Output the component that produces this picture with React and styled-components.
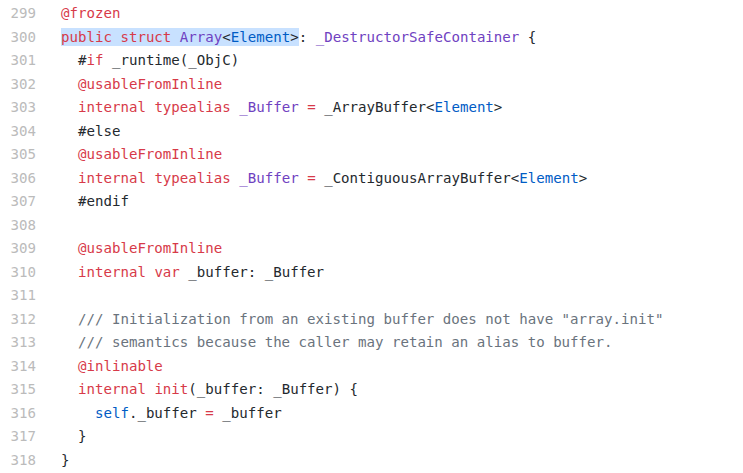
import React from "react";
import styled, { createGlobalStyle } from "styled-components";

const GlobalStyle = createGlobalStyle`
  html, body {
    margin: 0;
    padding: 0;
    background: #fff;
  }
`;

const Blob = styled.div`
  display: flex;
  flex-direction: column;
  padding-top: 2px;
  font-family: "DejaVu Sans Mono", "Liberation Mono", monospace;
  font-size: 14.1px;
  line-height: 23.5px;
  color: #24292e;
  width: 743px;
`;

const Row = styled.div`
  display: flex;
  gap: 25px;
  height: 23.5px;
`;

const LineNum = styled.div`
  width: 36px;
  flex: none;
  text-align: right;
  color: #bbbbbb;
`;

const Code = styled.div`
  white-space: pre;
`;

const colors = {
  kw: "#d73a49",
  ent: "#6f42c1",
  c: "#005cc5",
  cm: "#6a737d",
  t: "#24292e",
};

const Tok = styled.span`
  color: ${(p) => colors[p.$kind] || colors.t};
`;

const Mark = styled.span`
  background: #c8e1ff;
  padding: 1px 0 1px;
`;

const lines = [
  [299, [["kw", "@frozen"]]],
  [
    300,
    [
      ["mark", [["kw", "public"], ["t", " "], ["kw", "struct"], ["t", " "], ["ent", "Array"], ["t", "<"], ["c", "Element"], ["t", ">"]]],
      ["t", ": "],
      ["ent", "_DestructorSafeContainer"],
      ["t", " {"],
    ],
  ],
  [301, [["t", "  #"], ["kw", "if"], ["t", " _runtime(_ObjC)"]]],
  [302, [["t", "  "], ["kw", "@usableFromInline"]]],
  [
    303,
    [
      ["t", "  "],
      ["kw", "internal"],
      ["t", " "],
      ["kw", "typealias"],
      ["t", " "],
      ["ent", "_Buffer"],
      ["t", " "],
      ["kw", "="],
      ["t", " _ArrayBuffer<"],
      ["c", "Element"],
      ["t", ">"],
    ],
  ],
  [304, [["t", "  #else"]]],
  [305, [["t", "  "], ["kw", "@usableFromInline"]]],
  [
    306,
    [
      ["t", "  "],
      ["kw", "internal"],
      ["t", " "],
      ["kw", "typealias"],
      ["t", " "],
      ["ent", "_Buffer"],
      ["t", " "],
      ["kw", "="],
      ["t", " _ContiguousArrayBuffer<"],
      ["c", "Element"],
      ["t", ">"],
    ],
  ],
  [307, [["t", "  #endif"]]],
  [308, []],
  [309, [["t", "  "], ["kw", "@usableFromInline"]]],
  [310, [["t", "  "], ["kw", "internal"], ["t", " "], ["kw", "var"], ["t", " _buffer: _Buffer"]]],
  [311, []],
  [312, [["cm", '  /// Initialization from an existing buffer does not have "array.init"']]],
  [313, [["cm", "  /// semantics because the caller may retain an alias to buffer."]]],
  [314, [["t", "  "], ["kw", "@inlinable"]]],
  [315, [["t", "  "], ["kw", "internal"], ["t", " "], ["kw", "init"], ["t", "(_buffer: _Buffer) {"]]],
  [316, [["t", "    "], ["c", "self"], ["t", "._buffer "], ["kw", "="], ["t", " _buffer"]]],
  [317, [["t", "  }"]]],
  [318, [["t", "}"]]],
];

const renderTokens = (tokens) =>
  tokens.map(([kind, text], i) =>
    kind === "mark" ? (
      <Mark key={i}>{renderTokens(text)}</Mark>
    ) : (
      <Tok key={i} $kind={kind}>
        {text}
      </Tok>
    )
  );

export default function App() {
  return (
    <>
      <GlobalStyle />
      <Blob>
        {lines.map(([num, tokens]) => (
          <Row key={num}>
            <LineNum>{num}</LineNum>
            <Code>{renderTokens(tokens)}</Code>
          </Row>
        ))}
      </Blob>
    </>
  );
}
